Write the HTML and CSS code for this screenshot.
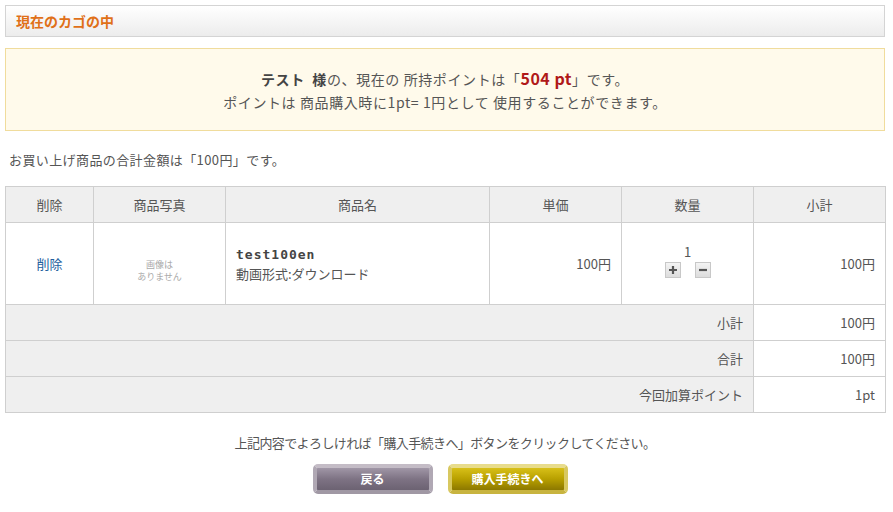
FILE: index.html
```html
<!DOCTYPE html>
<html lang="ja">

<head>
    <meta charset="UTF-8">
    <meta name="viewport" content="width=device-width, initial-scale=1.0">
    <title>現在のカゴの中</title>
    <link rel="stylesheet" href="styles.css">
</head>

<body>
    <div class="page">
        <h2 class="title-bar">現在のカゴの中</h2>

        <div class="point-box">
            <p><strong>テスト&nbsp;&nbsp;様</strong>の、現在の 所持ポイントは「<span class="point">504 pt</span>」です。</p>
            <p>ポイントは 商品購入時に1pt= 1円として 使用することができます。</p>
        </div>

        <p class="total-note">お買い上げ商品の合計金額は「100円」です。</p>

        <table class="cart">
            <thead>
                <tr>
                    <th class="col-del">削除</th>
                    <th class="col-photo">商品写真</th>
                    <th class="col-name">商品名</th>
                    <th class="col-price">単価</th>
                    <th class="col-qty">数量</th>
                    <th class="col-sub">小計</th>
                </tr>
            </thead>
            <tbody>
                <tr class="item">
                    <td class="center"><a href="#" class="del-link">削除</a></td>
                    <td class="center"><span class="no-image">画像は<br>ありません</span></td>
                    <td>
                        <div class="item-code">test100en</div>
                        <div>動画形式:ダウンロード</div>
                    </td>
                    <td class="right">100円</td>
                    <td class="center">
                        <div class="qty">1</div>
                        <div class="qty-btns">
                            <a href="#" class="qty-btn">
                                <svg width="14" height="14" viewBox="0 0 14 14"><path d="M7 3v8M3 7h8" stroke="#555" stroke-width="2.2"/></svg>
                            </a>
                            <a href="#" class="qty-btn">
                                <svg width="14" height="14" viewBox="0 0 14 14"><path d="M3 7h8" stroke="#555" stroke-width="2.2"/></svg>
                            </a>
                        </div>
                    </td>
                    <td class="right">100円</td>
                </tr>
                <tr class="sum">
                    <th colspan="5">小計</th>
                    <td>100円</td>
                </tr>
                <tr class="sum">
                    <th colspan="5">合計</th>
                    <td>100円</td>
                </tr>
                <tr class="sum">
                    <th colspan="5">今回加算ポイント</th>
                    <td>1pt</td>
                </tr>
            </tbody>
        </table>

        <p class="confirm-note">上記内容でよろしければ「購入手続きへ」ボタンをクリックしてください。</p>

        <div class="btn-row">
            <a href="#" class="btn btn-back">戻る</a>
            <a href="#" class="btn btn-buy">購入手続きへ</a>
        </div>
    </div>
</body>

</html>
```

FILE: styles.css
```css
body {
    margin: 0;
    background-color: #fff;
    color: #555;
    font-family: "Noto Sans CJK JP", "Noto Sans", sans-serif;
    font-size: 13px;
}

.page {
    padding: 5px 8px 10px 5px;
}

.title-bar {
    margin: 0;
    height: 30px;
    line-height: 30px;
    padding: 0 10px;
    border: 1px solid #d4d4d4;
    background: linear-gradient(#ffffff, #ececec);
    color: #e07018;
    font-size: 14px;
    font-weight: bold;
}

.point-box {
    margin-top: 11px;
    height: 83px;
    box-sizing: border-box;
    padding-top: 18px;
    border: 1px solid #f0dc9c;
    background-color: #fffaeb;
    text-align: center;
    font-size: 14px;
    letter-spacing: 0.6px;
}

.point-box p {
    margin: 0;
    line-height: 23px;
}

.point-box strong {
    color: #444;
}

.point {
    color: #b01818;
    font-weight: bold;
    font-size: 16px;
    letter-spacing: 0.5px;
}

.total-note {
    margin: 19px 0 0 4px;
    line-height: 20px;
    letter-spacing: 0.4px;
}

.cart {
    margin-top: 16px;
    width: 100%;
    border-collapse: collapse;
    table-layout: fixed;
}

.cart th,
.cart td {
    box-sizing: border-box;
    border: 1px solid #cfcfcf;
    height: 36px;
    padding: 0 10px;
    font-weight: normal;
}

.cart thead th {
    background-color: #efefef;
    text-align: center;
}

.col-del { width: 88px; }
.col-photo { width: 132px; }
.col-name { width: 264px; }
.col-price { width: 132px; }
.col-qty { width: 132px; }
.col-sub { width: 132px; }

.item td {
    height: 82px;
}

.center {
    text-align: center;
}

.right {
    text-align: right;
}

.del-link {
    color: #22609e;
    text-decoration: none;
}

.no-image {
    display: inline-block;
    margin-top: 16px;
    color: #aaa;
    font-size: 9px;
    line-height: 12px;
}

.item-code {
    font-family: "DejaVu Sans Mono", monospace;
    font-weight: bold;
    font-size: 13px;
    letter-spacing: 1px;
    color: #444;
    line-height: 19px;
}

.qty {
    line-height: 14px;
    margin-top: -4px;
}

.qty-btns {
    display: flex;
    justify-content: center;
    gap: 14px;
    margin-top: 3px;
}

.qty-btn {
    display: block;
    width: 14px;
    height: 14px;
    border: 1px solid #c8c8c8;
    background: linear-gradient(#f4f4f4, #dcdcdc);
}

.qty-btn svg {
    display: block;
}

.sum th {
    background-color: #efefef;
    text-align: right;
}

.sum td {
    text-align: right;
}

.confirm-note {
    margin: 20px 0 0;
    text-align: center;
    line-height: 20px;
    letter-spacing: -0.6px;
}

.btn-row {
    display: flex;
    justify-content: center;
    gap: 15px;
    margin-top: 11px;
    padding-right: 10px;
}

.btn {
    display: block;
    width: 112px;
    height: 22px;
    line-height: 22px;
    border: 4px solid;
    border-radius: 5px;
    color: #fff;
    font-weight: bold;
    font-size: 12px;
    text-align: center;
    text-decoration: none;
}

.btn-back {
    border-color: #c4bcc6 #b0a8b4 #a098a4;
    background: linear-gradient(#a096a6, #7e7384 50%, #6c6272);
}

.btn-buy {
    border-color: #e8dc8c #d8c860 #c8b440;
    background: linear-gradient(#d8c018, #b8a000 50%, #8c7800);
}
```
